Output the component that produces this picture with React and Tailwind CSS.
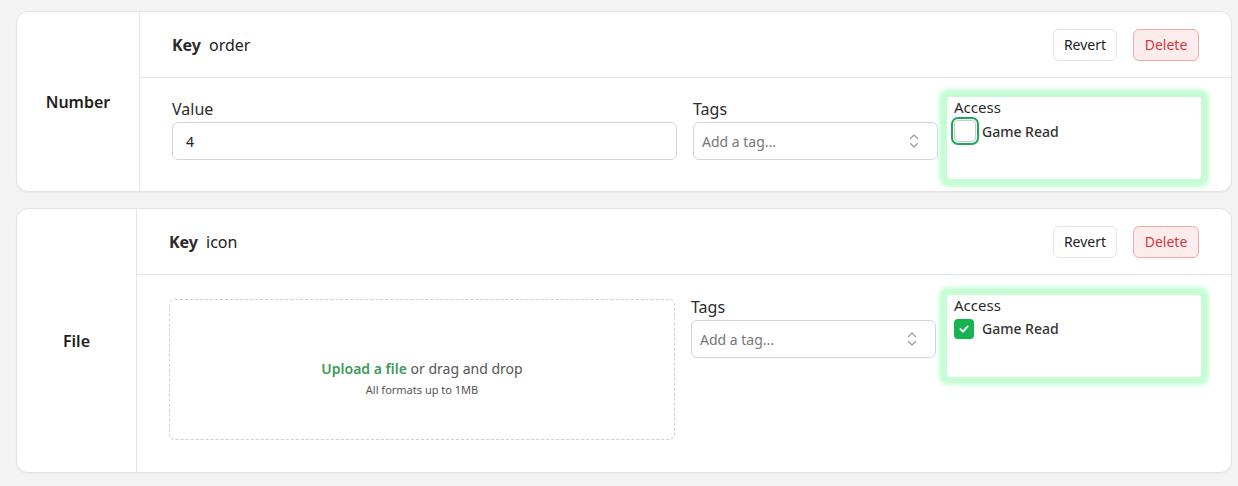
import React from "react";

const font = { fontFamily: '"Noto Sans", "Open Sans", sans-serif' };

function ChevronsUpDown() {
  return (
    <svg width="12" height="16" viewBox="0 0 12 16" fill="none" stroke="#9a9a9a" strokeWidth="1.2" strokeLinecap="round" strokeLinejoin="round">
      <path d="M2.5 5.5 L6 2 L9.5 5.5" />
      <path d="M2.5 10.5 L6 14 L9.5 10.5" />
    </svg>
  );
}

function Header({ k }) {
  return (
    <div className="flex h-[66px] items-center justify-between border-b border-[#e6e6e6] pl-8 pr-8">
      <div className="flex items-baseline text-[16px] text-[#222]">
        <span className="font-bold text-[#2b2b2b]">Key</span>
        <span className="ml-2">{k}</span>
      </div>
      <div className="flex items-center gap-4">
        <button className="h-8 w-16 rounded-md border border-[#e4e4e4] bg-white text-[14px] text-[#222]">Revert</button>
        <button className="h-8 w-[66px] rounded-md border border-[#f2a9a9] bg-[#fdecec] text-[14px] text-[#d4373e]">Delete</button>
      </div>
    </div>
  );
}

function Tags() {
  return (
    <div className="w-[245px] shrink-0">
      <div className="h-6 text-[16px] leading-6 text-[#2b2b2b]">Tags</div>
      <div className="mt-px flex h-[38px] items-center justify-between rounded-md border border-[#d4d4d4] bg-white pl-2 pr-[17px]">
        <span className="text-[14px] text-[#777]">Add a tag...</span>
        <ChevronsUpDown />
      </div>
    </div>
  );
}

function Access({ checked, ml }) {
  return (
    <div className={`${ml} h-[82px] w-[254px] shrink-0 rounded-[3px] bg-white pl-[7px] shadow-[0_0_4px_8px_#c4fcd3]`}>
      <div className="h-5 text-[15px] leading-5 text-[#2b2b2b]">Access</div>
      <div className="mt-[3px] flex items-center">
        {checked ? (
          <div className="flex h-5 w-5 items-center justify-center rounded-[4px] bg-[#16b350]">
            <svg width="12" height="12" viewBox="0 0 12 12" fill="none" stroke="white" strokeWidth="2" strokeLinecap="round" strokeLinejoin="round">
              <path d="M2.5 6.2 L5 8.6 L9.6 3.6" />
            </svg>
          </div>
        ) : (
          <div className="h-[22px] w-[22px] rounded-[4px] border border-[#c8c8c8] bg-white ring-2 ring-[#1aa85a] ring-offset-[1px]" />
        )}
        <span className={`${checked ? "ml-2" : "ml-[6px]"} text-[14px] font-medium text-[#333]`}>Game Read</span>
      </div>
    </div>
  );
}

export default function App() {
  return (
    <div className="min-h-[486px] w-[1238px] bg-[#f3f3f3] pt-[11px]" style={font}>
      {/* Card 1 */}
      <div className="ml-4 flex w-[1216px] overflow-hidden rounded-xl border border-[#e3e3e3] bg-white shadow-[0_1px_2px_rgba(0,0,0,0.04)]">
        <div className="flex w-[123px] shrink-0 items-center justify-center border-r border-[#e6e6e6] text-[16px] font-semibold text-[#1e1e1e]">
          Number
        </div>
        <div className="flex-1">
          <Header k="order" />
          <div className="flex items-start pb-3 pl-8 pr-[30px] pt-[19px]">
            <div className="mr-4 flex-1">
              <div className="h-6 text-[16px] leading-6 text-[#2b2b2b]">Value</div>
              <div className="mt-px flex h-[38px] items-center rounded-md border border-[#d4d4d4] bg-white px-[13px] text-[14px] text-[#222]">
                4
              </div>
            </div>
            <Tags />
            <Access checked={false} ml="ml-[9px]" />
          </div>
        </div>
      </div>

      {/* Card 2 */}
      <div className="ml-4 mt-4 flex w-[1216px] overflow-hidden rounded-xl border border-[#e3e3e3] bg-white shadow-[0_1px_2px_rgba(0,0,0,0.04)]">
        <div className="flex w-[120px] shrink-0 items-center justify-center border-r border-[#e6e6e6] text-[16px] font-semibold text-[#1e1e1e]">
          File
        </div>
        <div className="flex-1">
          <Header k="icon" />
          <div className="flex items-start pb-8 pl-8 pr-[30px] pt-5">
            <div className="mr-4 mt-1 flex h-[141px] flex-1 flex-col items-center rounded-md border border-dashed border-[#cfcfcf] pt-[59px]">
              <div className="text-[14px] leading-5 text-[#555]">
                <span className="font-semibold text-[#3d9b58]">Upload a file</span> or drag and drop
              </div>
              <div className="mt-[3px] text-[11px] leading-4 text-[#555]">All formats up to 1MB</div>
            </div>
            <Tags />
            <Access checked={true} ml="ml-[11px]" />
          </div>
        </div>
      </div>
    </div>
  );
}
